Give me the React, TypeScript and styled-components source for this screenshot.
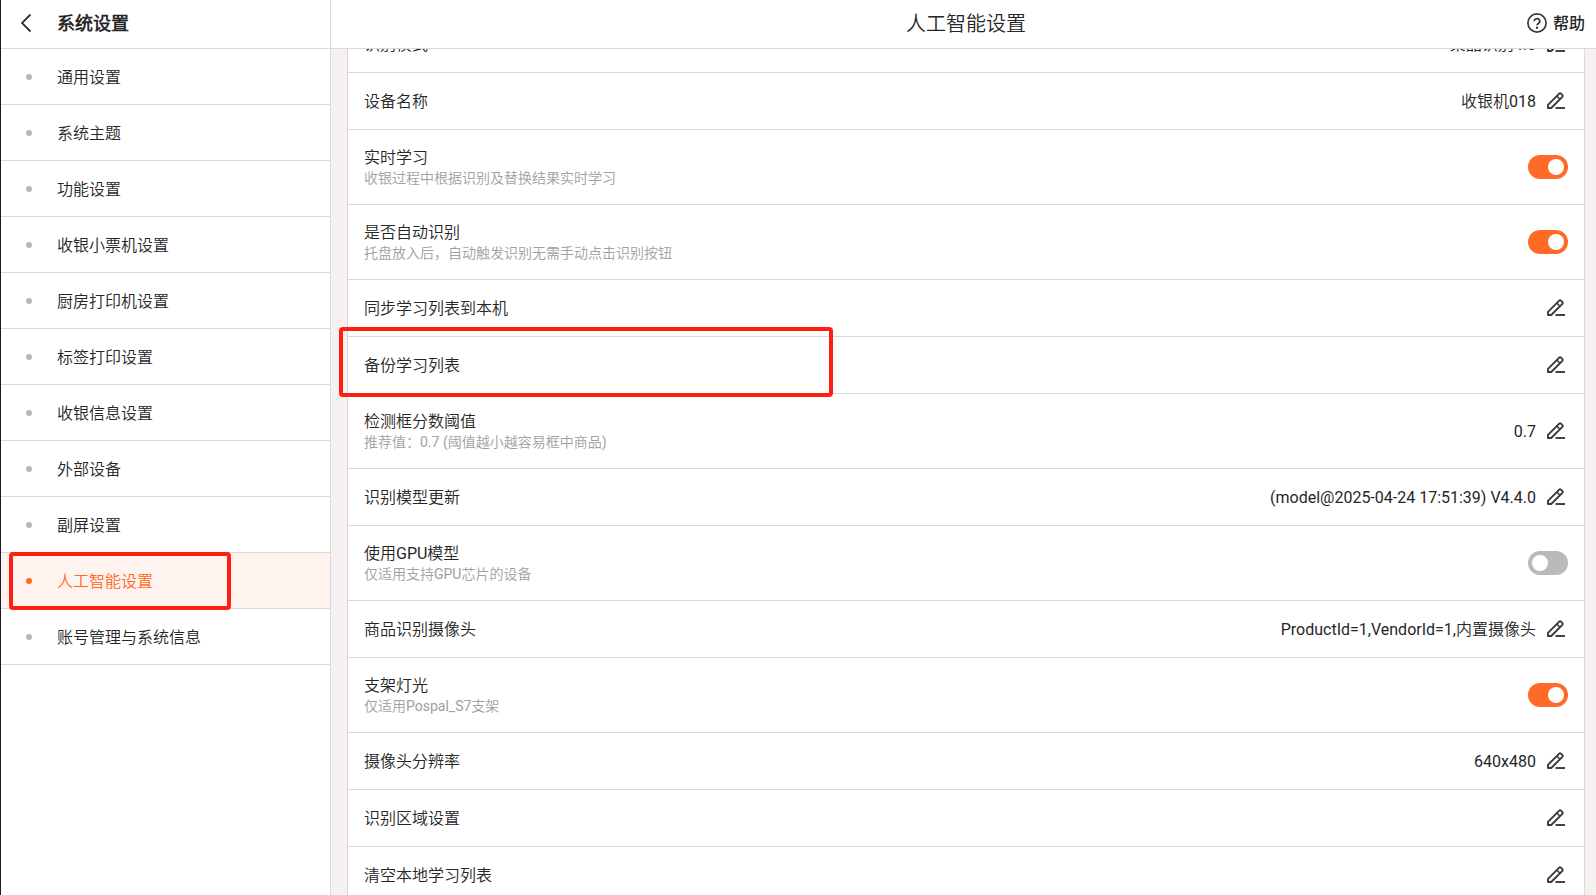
import React, { useLayoutEffect, useRef, useState } from 'react';
import styled, { createGlobalStyle } from 'styled-components';

const color = {
  line: '#d9d9d9',
  text: '#262626',
  muted: '#a0a0a0',
  accent: '#ff6a26',
  accentSoft: '#fff3ef',
  gutter: '#f5f1f0',
  marker: '#ff1f11',
};

const GlobalStyle = createGlobalStyle`
  *, *::before, *::after { box-sizing: border-box; }
  body {
    margin: 0;
    background: #fff;
    color: ${color.text};
    font-family: Roboto, "Noto Sans CJK SC DemiLight", "Noto Sans CJK SC", sans-serif;
    font-size: 16px;
    font-weight: 400;
    line-height: 22px;
  }
  button { font: inherit; color: inherit; border: 0; padding: 0; background: none; cursor: pointer; }
  h1, h2, ul { margin: 0; padding: 0; list-style: none; }
`;

const Page = styled.div`
  display: flex;
  height: 100vh;
  border-left: 1px solid #1c1b2b;
`;

const Sidebar = styled.aside`
  flex: 0 0 330px;
  border-right: 1px solid ${color.line};
`;

const SidebarHeader = styled.header`
  display: flex;
  align-items: center;
  gap: 24px;
  height: 49px;
  padding: 0 12px 2px;
  border-bottom: 1px solid ${color.line};
`;

const BackButton = styled.button`
  display: flex;
  align-items: center;
  justify-content: center;
  width: 20px;
  height: 32px;
`;

/* The CJK face sits high in its line box; this evens out the space above and below. */
const Text = styled.span`
  display: block;
  padding-top: 1px;
  margin-bottom: -1px;
`;

const SidebarTitle = styled.h2`
  font-size: 18px;
  font-weight: 700;
  line-height: 24px;
`;

const NavItem = styled.li`
  position: relative;
`;

const NavLink = styled.a<{ $active: boolean }>`
  display: flex;
  align-items: center;
  gap: 25px;
  height: 56px;
  padding-left: 25px;
  border-bottom: 1px solid ${color.line};
  color: ${(p) => (p.$active ? color.accent : color.text)};
  background: ${(p) => (p.$active ? color.accentSoft : '#fff')};
  text-decoration: none;
  &::before {
    content: '';
    width: 6px;
    height: 6px;
    border-radius: 50%;
    background: ${(p) => (p.$active ? color.accent : '#b8b8b8')};
  }
`;

const Marker = styled.div<{ $kind: 'nav' | 'row' }>`
  position: absolute;
  z-index: 2;
  border: 4px solid ${color.marker};
  border-radius: 4px;
  pointer-events: none;
  ${(p) =>
    p.$kind === 'nav'
      ? 'left: 8px; top: -1px; width: 222px; height: 58px;'
      : 'left: -9px; top: -10px; width: 494px; height: 70px;'}
`;

const Main = styled.main`
  flex: 1;
  min-width: 0;
  display: flex;
  flex-direction: column;
`;

const MainHeader = styled.header`
  flex: none;
  display: grid;
  grid-template-columns: 1fr auto 1fr;
  align-items: center;
  height: 49px;
  padding: 0 11px 2px 16px;
  border-bottom: 1px solid ${color.line};
`;

const MainTitle = styled.h1`
  grid-column: 2;
  font-size: 20px;
  font-weight: 400;
  line-height: 28px;
`;

const HelpButton = styled.button`
  justify-self: end;
  display: flex;
  align-items: center;
  gap: 6px;
  && {
    font-family: Roboto, "Noto Sans CJK SC", sans-serif;
    font-weight: 500;
  }
`;

const Scroller = styled.div`
  flex: 1;
  min-height: 0;
  overflow-y: auto;
  scrollbar-width: none;
  padding: 16px 11px 16px 16px;
  background: ${color.gutter};
`;

const Card = styled.ul`
  border: 1px solid ${color.line};
  border-bottom: 0;
  background: #fff;
`;

const Row = styled.li<{ $tall: boolean }>`
  position: relative;
  display: flex;
  align-items: center;
  justify-content: space-between;
  height: ${(p) => (p.$tall ? 75 : 57)}px;
  padding: 0 16px;
  border-bottom: 1px solid ${color.line};
`;

const Label = styled.div`
  display: flex;
  flex-direction: column;
`;

const Hint = styled.span`
  font-size: 14px;
  line-height: 20px;
  color: ${color.muted};
`;

const Value = styled.div`
  display: flex;
  align-items: center;
  gap: 8px;
`;

const EditButton = styled.button`
  display: flex;
  width: 24px;
  height: 24px;
`;

const Switch = styled.input`
  appearance: none;
  display: flex;
  align-items: center;
  width: 40px;
  height: 24px;
  margin: 0;
  padding: 0 4px;
  border-radius: 12px;
  background: #bababa;
  cursor: pointer;
  &::before {
    content: '';
    width: 16px;
    height: 16px;
    border-radius: 50%;
    background: #fff;
  }
  &:checked { background: ${color.accent}; justify-content: flex-end; }
`;

const BackIcon = () => (
  <svg width="20" height="20" viewBox="0 0 20 20" fill="none" stroke="#333" strokeWidth="1.8">
    <path d="M17.500 1.500 9 10l8.500 8.500" />
  </svg>
);

const HelpIcon = () => (
  <svg width="20" height="20" viewBox="0 0 20 20" fill="none" stroke="#3a3a3a" strokeWidth="1.700">
    <circle cx="10" cy="10" r="9.100" />
    <path d="M7.200 8.200a2.800 2.600 0 1 1 4.400 2.100c-1 .7-1.600 1-1.600 2" strokeWidth="1.800" />
    <circle cx="10" cy="14.700" r="1.200" fill="#3a3a3a" stroke="none" />
  </svg>
);

const PencilIcon = () => (
  <svg width="24" height="24" viewBox="0 0 24 24" fill="none" stroke="#3a3a3a" strokeWidth="1.900" strokeLinejoin="round">
    <path d="M4 19v-3.200L15.200 4.600a1.200 1.200 0 0 1 1.700 0l1.500 1.500a1.200 1.200 0 0 1 0 1.700L7.200 19H4Z" />
    <path d="m12.800 7 3.200 3.200" strokeWidth="1.600" />
    <path d="M11.500 19H21" />
  </svg>
);

const navItems = [
  '通用设置', '系统主题', '功能设置', '收银小票机设置', '厨房打印机设置', '标签打印设置',
  '收银信息设置', '外部设备', '副屏设置', '人工智能设置', '账号管理与系统信息',
];

type Setting = { title: string; hint?: string; value?: string; on?: boolean; marked?: boolean };

const settings: Setting[] = [
  { title: '识别模式', value: '菜品识别4.0' },
  { title: '设备名称', value: '收银机018' },
  { title: '实时学习', hint: '收银过程中根据识别及替换结果实时学习', on: true },
  { title: '是否自动识别', hint: '托盘放入后，自动触发识别无需手动点击识别按钮', on: true },
  { title: '同步学习列表到本机' },
  { title: '备份学习列表', marked: true },
  { title: '检测框分数阈值', hint: '推荐值：0.7 (阈值越小越容易框中商品)', value: '0.7' },
  { title: '识别模型更新', value: '(model@2025-04-24 17:51:39) V4.4.0' },
  { title: '使用GPU模型', hint: '仅适用支持GPU芯片的设备', on: false },
  { title: '商品识别摄像头', value: 'ProductId=1,VendorId=1,内置摄像头' },
  { title: '支架灯光', hint: '仅适用Pospal_S7支架', on: true },
  { title: '摄像头分辨率', value: '640x480' },
  { title: '识别区域设置' },
  { title: '清空本地学习列表' },
];

function SettingRow({ item, id }: { item: Setting; id: string }) {
  const [checked, setChecked] = useState(!!item.on);
  const isSwitch = item.on !== undefined;
  return (
    <Row $tall={!!item.hint}>
      <Label>
        {isSwitch ? (
          <Text as="label" htmlFor={id}>{item.title}</Text>
        ) : (
          <Text>{item.title}</Text>
        )}
        {item.hint && <Hint>{item.hint}</Hint>}
      </Label>
      {isSwitch ? (
        <Switch id={id} type="checkbox" role="switch" checked={checked} onChange={() => setChecked(!checked)} />
      ) : (
        <Value>
          {item.value && <Text>{item.value}</Text>}
          <EditButton type="button" aria-label={item.title}>
            <PencilIcon />
          </EditButton>
        </Value>
      )}
      {item.marked && <Marker $kind="row" />}
    </Row>
  );
}

export default function App() {
  const [active, setActive] = useState('人工智能设置');
  const scroller = useRef<HTMLDivElement>(null);

  // The list opens scrolled down, with its first row partly under the header.
  useLayoutEffect(() => {
    if (scroller.current) scroller.current.scrollTop = 50;
  }, []);

  return (
    <>
      <GlobalStyle />
      <Page>
        <Sidebar>
          <SidebarHeader>
            <BackButton type="button" aria-label="返回">
              <BackIcon />
            </BackButton>
            <SidebarTitle>
              <Text>系统设置</Text>
            </SidebarTitle>
          </SidebarHeader>
          <nav>
            <ul>
              {navItems.map((name) => (
                <NavItem key={name}>
                  <NavLink
                    href="#"
                    $active={name === active}
                    onClick={(e) => {
                      e.preventDefault();
                      setActive(name);
                    }}
                  >
                    <Text>{name}</Text>
                  </NavLink>
                  {name === '人工智能设置' && <Marker $kind="nav" />}
                </NavItem>
              ))}
            </ul>
          </nav>
        </Sidebar>
        <Main>
          <MainHeader>
            <MainTitle>
              <Text>人工智能设置</Text>
            </MainTitle>
            <HelpButton type="button">
              <HelpIcon />
              <Text>帮助</Text>
            </HelpButton>
          </MainHeader>
          <Scroller ref={scroller}>
            <Card>
              {settings.map((item, i) => (
                <SettingRow key={item.title} item={item} id={`setting-${i}`} />
              ))}
            </Card>
          </Scroller>
        </Main>
      </Page>
    </>
  );
}
